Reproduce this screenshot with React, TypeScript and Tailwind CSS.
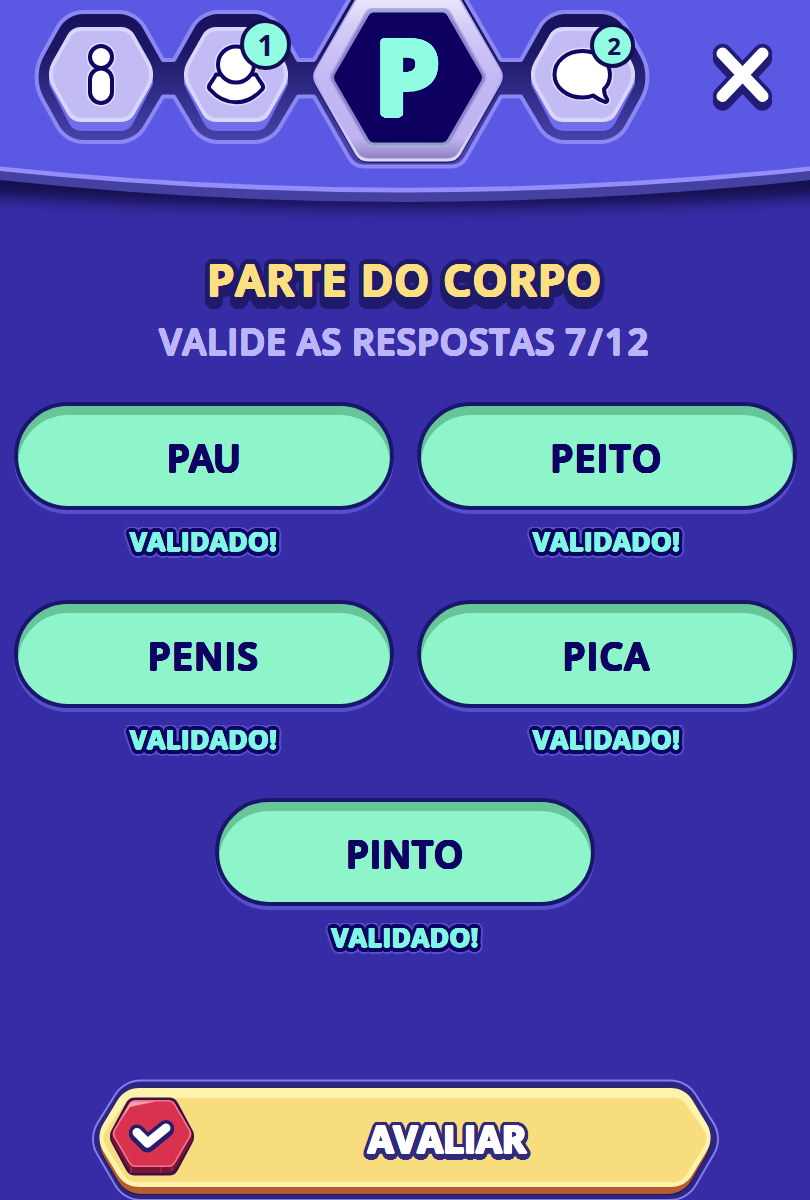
import React from 'react';

type Corner = [x: number, y: number, radius: number];

// Closed polygon with rounded corners
const roundedPath = (corners: Corner[]) => {
  const n = corners.length;
  const parts = corners.map(([x, y, r], i) => {
    const [px, py] = corners[(i + n - 1) % n];
    const [nx, ny] = corners[(i + 1) % n];
    const a = Math.hypot(px - x, py - y);
    const b = Math.hypot(nx - x, ny - y);
    const ux = (px - x) / a;
    const uy = (py - y) / a;
    const vx = (nx - x) / b;
    const vy = (ny - y) / b;
    const half = Math.acos(ux * vx + uy * vy) / 2;
    const t = Math.min(r / Math.tan(half), a / 2, b / 2);
    const radius = t * Math.tan(half);
    const sweep = ux * vy - uy * vx < 0 ? 1 : 0;
    return `${i ? 'L' : 'M'}${x + ux * t} ${y + uy * t}A${radius} ${radius} 0 0 ${sweep} ${x + vx * t} ${y + vy * t}`;
  });
  return parts.join('') + 'Z';
};

const hexagon = (cx: number, cy: number, halfW: number, halfTop: number, halfH: number, r: number, side = r) =>
  roundedPath([
    [cx - halfW, cy, side],
    [cx - halfTop, cy - halfH, r],
    [cx + halfTop, cy - halfH, r],
    [cx + halfW, cy, side],
    [cx + halfTop, cy + halfH, r],
    [cx - halfTop, cy + halfH, r],
  ]);

// Same hexagon with its lower half pulled down, for the thickness of a key
const thickHexagon = (cx: number, cy: number, halfW: number, halfTop: number, halfH: number, r: number, depth: number) =>
  roundedPath([
    [cx - halfW, cy, r],
    [cx - halfTop, cy - halfH, r],
    [cx + halfTop, cy - halfH, r],
    [cx + halfW, cy, r],
    [cx + halfW, cy + depth, r],
    [cx + halfTop, cy + halfH + depth, r],
    [cx - halfTop, cy + halfH + depth, r],
    [cx - halfW, cy + depth, r],
  ]);

// Round text outline built from stacked shadows
const ring = (radius: number, color: string, dy = 0) =>
  Array.from({ length: 24 }, (_, i) => {
    const angle = (i * Math.PI) / 12;
    return `${(Math.cos(angle) * radius).toFixed(2)}px ${(Math.sin(angle) * radius + dy).toFixed(2)}px 0 ${color}`;
  }).join(',');

const SOCKETS = roundedPath([
  [30, 77, 46], [66, 12, 30], [136, 12, 30], [163, 60, 1],
  [174, 60, 1], [201, 12, 30], [271, 12, 30], [298, 60, 1],
  [314, 60, 1], [354, -9, 10], [461, -9, 10], [501, 60, 1],
  [521, 60, 1], [548, 12, 30], [618, 12, 30], [654, 77, 46],
  [618, 142, 30], [548, 142, 30], [521, 96.5, 1],
  [501, 96.5, 1], [461, 166.5, 18], [354, 166.5, 18], [314, 96.5, 1],
  [298, 96.5, 1], [271, 142, 30], [201, 142, 30], [174, 96.5, 1],
  [163, 96.5, 1], [136, 142, 30], [66, 142, 30],
]);

const HeaderArt = () => (
  <svg className="absolute inset-0" width="810" height="240" viewBox="0 0 810 240" aria-hidden="true">
    <defs>
      <linearGradient id="socket" x1="0" y1="12" x2="0" y2="142" gradientUnits="userSpaceOnUse">
        <stop offset="0" stopColor="#17125a" />
        <stop offset="0.3" stopColor="#1d1866" />
        <stop offset="1" stopColor="#4743ab" />
      </linearGradient>
      <filter id="soft" x="-10%" y="-50%" width="120%" height="200%" colorInterpolationFilters="sRGB">
        <feGaussianBlur stdDeviation="8" />
      </filter>
    </defs>
    <path d="M-40 100H850V194Q405 222 -40 194Z" fill="#150f4c" filter="url(#soft)" />
    <path d="M0 0H810V180Q405 224 0 180Z" fill="#4541a3" />
    <path d="M0 0H810V171Q405 214 0 171Z" fill="#938efa" />
    <path d="M0 0H810V166.500Q405 209 0 166.500Z" fill="#5b59e3" />
    <path d={SOCKETS} fill="url(#socket)" stroke="#8b87f3" strokeWidth="4" />
  </svg>
);

const HexButton = ({ label, badge, children }: { label: string; badge?: React.ReactNode; children: React.ReactNode }) => (
  <button aria-label={label} className="relative mt-[27px] h-[105px] w-[104px] shrink-0">
    <svg width="104" height="105" viewBox="0 0 104 105">
      <path d={thickHexagon(52, 47.5, 52.5, 28, 47.5, 15, 9)} fill="#716eee" />
      <path d={hexagon(52, 47.5, 56, 29, 47.5, 16, 26)} fill="#d9d5fd" />
      <path d={hexagon(52, 47.5, 51.5, 27, 43.5, 14, 24)} fill="#c3bbf3" />
      {children}
    </svg>
    {badge}
  </button>
);

const InfoIcon = () => (
  <g>
    <g fill="#e8e5ff" stroke="#e2deff" strokeWidth="7">
      <circle cx="52" cy="30" r="11" />
      <rect x="41" y="41" width="22" height="35" rx="11" />
    </g>
    <g fill="#fff" stroke="#100765" strokeWidth="4">
      <rect x="41" y="41.500" width="22" height="34.500" rx="11" />
      <circle cx="52" cy="30" r="11" />
    </g>
  </g>
);

const USER_BODY = 'M32 47.500C30 52 27 55 25.500 58C24.500 60 25 61.500 26 62.500C41 79.500 63 79.500 78 62.500C79 61.500 79.500 60 78.500 58C77 55 74 52 72 47.500Z';

const UserIcon = () => (
  <g strokeLinejoin="round">
    <g fill="#e2deff" stroke="#e2deff" strokeWidth="7">
      <path d={USER_BODY} />
      <circle cx="52" cy="37.500" r="18" />
    </g>
    <g fill="#fff" stroke="#100765" strokeWidth="4">
      <path d={USER_BODY} />
      <circle cx="52" cy="37.500" r="18" />
    </g>
  </g>
);

const BUBBLE = 'M51.500 24C66.500 24 79 34 79 47.500C79 54 77 58.500 73 62C73 66 74 69 76 72C77 74.500 75 75.500 73 74.500C69 73 65.500 71 62 68.500C59 70 55.500 70.500 51.500 70.500C36 70.500 23.500 60.500 23.500 47.500C23.500 34 36 24 51.500 24Z';

const ChatIcon = () => (
  <g strokeLinejoin="round">
    <path d={BUBBLE} fill="#e2deff" stroke="#e2deff" strokeWidth="7" />
    <path d={BUBBLE} fill="#fff" stroke="#100765" strokeWidth="4" />
  </g>
);

const LetterGem = () => (
  <div className="relative ml-[25px] -mt-[9px] flex h-[171px] w-[190px] shrink-0 items-center justify-center">
    <svg className="absolute inset-0" width="190" height="174" viewBox="0 0 190 174" aria-hidden="true">
      <defs>
        <linearGradient id="gem" x1="0" y1="0" x2="0" y2="1">
          <stop offset="0" stopColor="#f0edfd" />
          <stop offset="0.2" stopColor="#d4cdf8" />
          <stop offset="0.5" stopColor="#c3b9f6" />
          <stop offset="0.88" stopColor="#beb3ed" />
          <stop offset="1" stopColor="#8f84bf" />
        </linearGradient>
        <linearGradient id="gemEdge" x1="0" y1="0" x2="0" y2="1">
          <stop offset="0.5" stopColor="#b1a7f2" />
          <stop offset="1" stopColor="#ddd8fc" />
        </linearGradient>
        <linearGradient id="gemBevel" x1="0" y1="0" x2="0" y2="1">
          <stop offset="0" stopColor="#9babca" />
          <stop offset="0.1" stopColor="#8d82cb" />
          <stop offset="0.9" stopColor="#8d82cb" />
          <stop offset="1" stopColor="#8ba3c3" />
        </linearGradient>
      </defs>
      <path d={hexagon(95, 87, 98, 48.5, 85, 15)} fill="#27206f" />
      <path d={hexagon(95, 85.5, 97, 48.5, 85, 15)} fill="url(#gemEdge)" />
      <path d={hexagon(95, 84.5, 95, 47, 83, 14)} fill="url(#gem)" />
      <path d={hexagon(95, 86.5, 80, 40.5, 69.5, 8)} fill="#b3a9ea" />
      <path d={hexagon(95, 86.5, 78, 39.5, 68, 8)} fill="url(#gemBevel)" />
      <path d={hexagon(95, 86.5, 75, 37.5, 65, 6)} fill="#0d0060" />
    </svg>
    <span
      className="relative pr-[2px] pb-[4px] text-[103px] leading-none font-bold text-[#90fde2]"
      style={{ textShadow: `${ring(3.5, '#90fde2')},${ring(1.8, '#90fde2')}` }}
    >
      P
    </span>
  </div>
);

const CloseButton = () => (
  <button aria-label="Fechar" className="mt-[43px] ml-[77px] shrink-0">
    <svg width="61" height="69" viewBox="0 0 61 69" strokeLinecap="round" strokeLinejoin="round" fill="none">
      <path d="M10.500 15.500L50.500 58M50.500 15.500L10.500 58" stroke="#231c74" strokeWidth="19.500" />
      <path d="M10.500 10.500L50.500 53M50.500 10.500L10.500 53" stroke="#231c74" strokeWidth="19.500" />
      <path d="M10.500 10.500L50.500 53M50.500 10.500L10.500 53" stroke="#fff" strokeWidth="12" />
    </svg>
  </button>
);

const Answer = ({ word, tracking }: { word: string; tracking: string }) => (
  <div className="flex h-[198px] w-[380px] flex-col items-center">
    <button
      className={`flex h-[108px] w-full items-center justify-center rounded-full border-4 border-[#19176b] bg-[#8ef5ca] pt-1 text-[37px] font-semibold text-[#0d0263] shadow-[inset_0_9px_0_#66c698,0_4px_0_#5650ce] ${tracking}`}
      style={{ textShadow: ring(0.8, '#0d0263') }}
    >
      {word}
    </button>
    <span
      className="mt-[14px] text-[26px] leading-[34px] font-bold tracking-[0.5px] text-[#82f6e4]"
      style={{
        textShadow: `${ring(0.5, '#82f6e4')},${ring(4, '#0c0564')},${ring(2.4, '#0c0564')},${ring(4, '#0c0564', 1)},${ring(6, '#5a50cb', 0.5)}`,
      }}
    >
      VALIDADO!
    </span>
  </div>
);

const CheckBadge = () => (
  <svg className="absolute top-[18px] left-[19px]" width="84" height="80" viewBox="0 0 84 80" aria-hidden="true">
    <path d={thickHexagon(42, 36, 42, 23, 35.5, 10, 7)} fill="#3b1046" />
    <path d={thickHexagon(42, 37, 40, 21, 32, 9, 7)} fill="#781435" />
    <path d="M21 69V76M51 70V76M62 69V74" stroke="#a3274b" strokeWidth="1.500" />
    <path d={hexagon(42, 36.5, 40.5, 21, 33.5, 8)} fill="#f7728b" />
    <path d={hexagon(42, 36.5, 38.5, 20, 32, 7)} fill="#d8324f" />
    <path d="M10 24L19 8Q21 4.500 25 4.500H47Q32 7 20 10Q16 16 10 24Z" fill="#f5a0ae" />
    <g fill="none" strokeLinecap="round" strokeLinejoin="round">
      <path d="M27 37L37.500 47.500L56 32.500" stroke="#271b6c" strokeWidth="16" />
      <path d="M27 35.500L37.500 46L56 31" stroke="#271b6c" strokeWidth="16" />
      <path d="M27 35.500L37.500 46L56 31" stroke="#fff" strokeWidth="9" />
    </g>
  </svg>
);

// Long hexagonal bar, drawn inside the 628px wide button
const bar = (left: number, right: number, top: number, mid: number, bottom: number, slope: number, r: number) =>
  roundedPath([
    [left, mid, r],
    [left + slope, top, r],
    [right - slope, top, r],
    [right, mid, r],
    [right - slope, bottom, r],
    [left + slope, bottom, r],
  ]);

const EvaluateButton = () => (
  <button className="relative flex h-[121px] w-[628px] items-center justify-center">
    <svg className="absolute inset-0 overflow-visible" width="628" height="122" viewBox="0 0 628 122" aria-hidden="true">
      <path d={bar(-3, 632, 1.5, 59.5, 121, 36, 30)} fill="#2c267f" stroke="#867cf0" strokeWidth="2" />
      <path d={bar(5, 622, 16, 66, 116, 30, 26)} fill="#1d1758" />
      <path d={bar(5, 622, 15, 64, 115, 30, 26)} fill="#b75c31" />
      <path d={bar(4, 624, 9, 58.5, 108, 30, 26)} fill="#fff2aa" />
      <path d={bar(10, 618, 19, 59, 103, 27, 14)} fill="#f8dd7e" />
    </svg>
    <CheckBadge />
    <span
      className="relative left-[42px] pb-[2px] text-[37px] leading-none font-bold text-white"
      style={{
        textShadow: `${ring(0.9, '#fff')},${ring(4.5, '#312a7c')},${ring(2.5, '#312a7c')},${ring(4.5, '#312a7c', 2)}`,
      }}
    >
      AVALIAR
    </span>
  </button>
);

const ANSWERS = [
  { word: 'PAU', tracking: 'tracking-[-0.5px]' },
  { word: 'PEITO', tracking: 'tracking-[1.5px]' },
  { word: 'PENIS', tracking: 'tracking-[1.5px]' },
  { word: 'PICA', tracking: 'tracking-[1.5px]' },
  { word: 'PINTO', tracking: 'tracking-[1px]' },
];

export default function App() {
  return (
    <div className="flex h-[1200px] w-[810px] flex-col overflow-hidden bg-[#362da6] font-['Open_Sans','Noto_Sans',sans-serif]">
      <header className="relative h-[240px] shrink-0">
        <HeaderArt />
        <nav className="relative flex items-start pl-[49px]">
          <HexButton label="Informações">
            <InfoIcon />
          </HexButton>
          <div className="ml-[31px]">
            <HexButton
              label="Jogadores"
              badge={
                <span className="absolute -top-[8px] left-[56px] flex h-[51px] w-[51px] items-center justify-center rounded-full border-4 border-[#130d55] bg-[#92fce1] text-[28px] font-bold text-[#130d55]">
                  1
                </span>
              }
            >
              <UserIcon />
            </HexButton>
          </div>
          <LetterGem />
          <div className="ml-[28px]">
            <HexButton
              label="Mensagens"
              badge={
                <span className="absolute -top-[4px] left-[59px] flex h-[45px] w-[45px] items-center justify-center rounded-full border-4 border-[#130d55] bg-[#92fce1] pl-[3px] text-[24px] font-bold text-[#130d55]">
                  2
                </span>
              }
            >
              <ChatIcon />
            </HexButton>
          </div>
          <CloseButton />
        </nav>
      </header>

      <main className="flex flex-1 flex-col items-center">
        <h1
          className="mt-[15px] text-[43px] leading-[50px] font-semibold tracking-[2px] text-[#fbdf80]"
          style={{
            textShadow: `${ring(1.3, '#fbdf80')},${ring(6, '#201a6a')},${ring(3.5, '#201a6a')},${ring(6, '#201a6a', 4)},${ring(6, '#201a6a', 7)}`,
          }}
        >
          PARTE DO CORPO
        </h1>
        <p
          className="mt-[14px] text-[36px] leading-[46px] font-semibold tracking-[0.7px] text-[#bdb5fa]"
          style={{ textShadow: ring(0.7, '#bdb5fa') }}
        >
          VALIDE AS RESPOSTAS <span className="tracking-[2.4px]">7/12</span>
        </p>

        <div className="mt-[37px] flex w-[783px] flex-wrap justify-center gap-x-[23px]">
          {ANSWERS.map(answer => (
            <Answer key={answer.word} {...answer} />
          ))}
        </div>

        <div className="mt-[83px]">
          <EvaluateButton />
        </div>
      </main>
    </div>
  );
}
